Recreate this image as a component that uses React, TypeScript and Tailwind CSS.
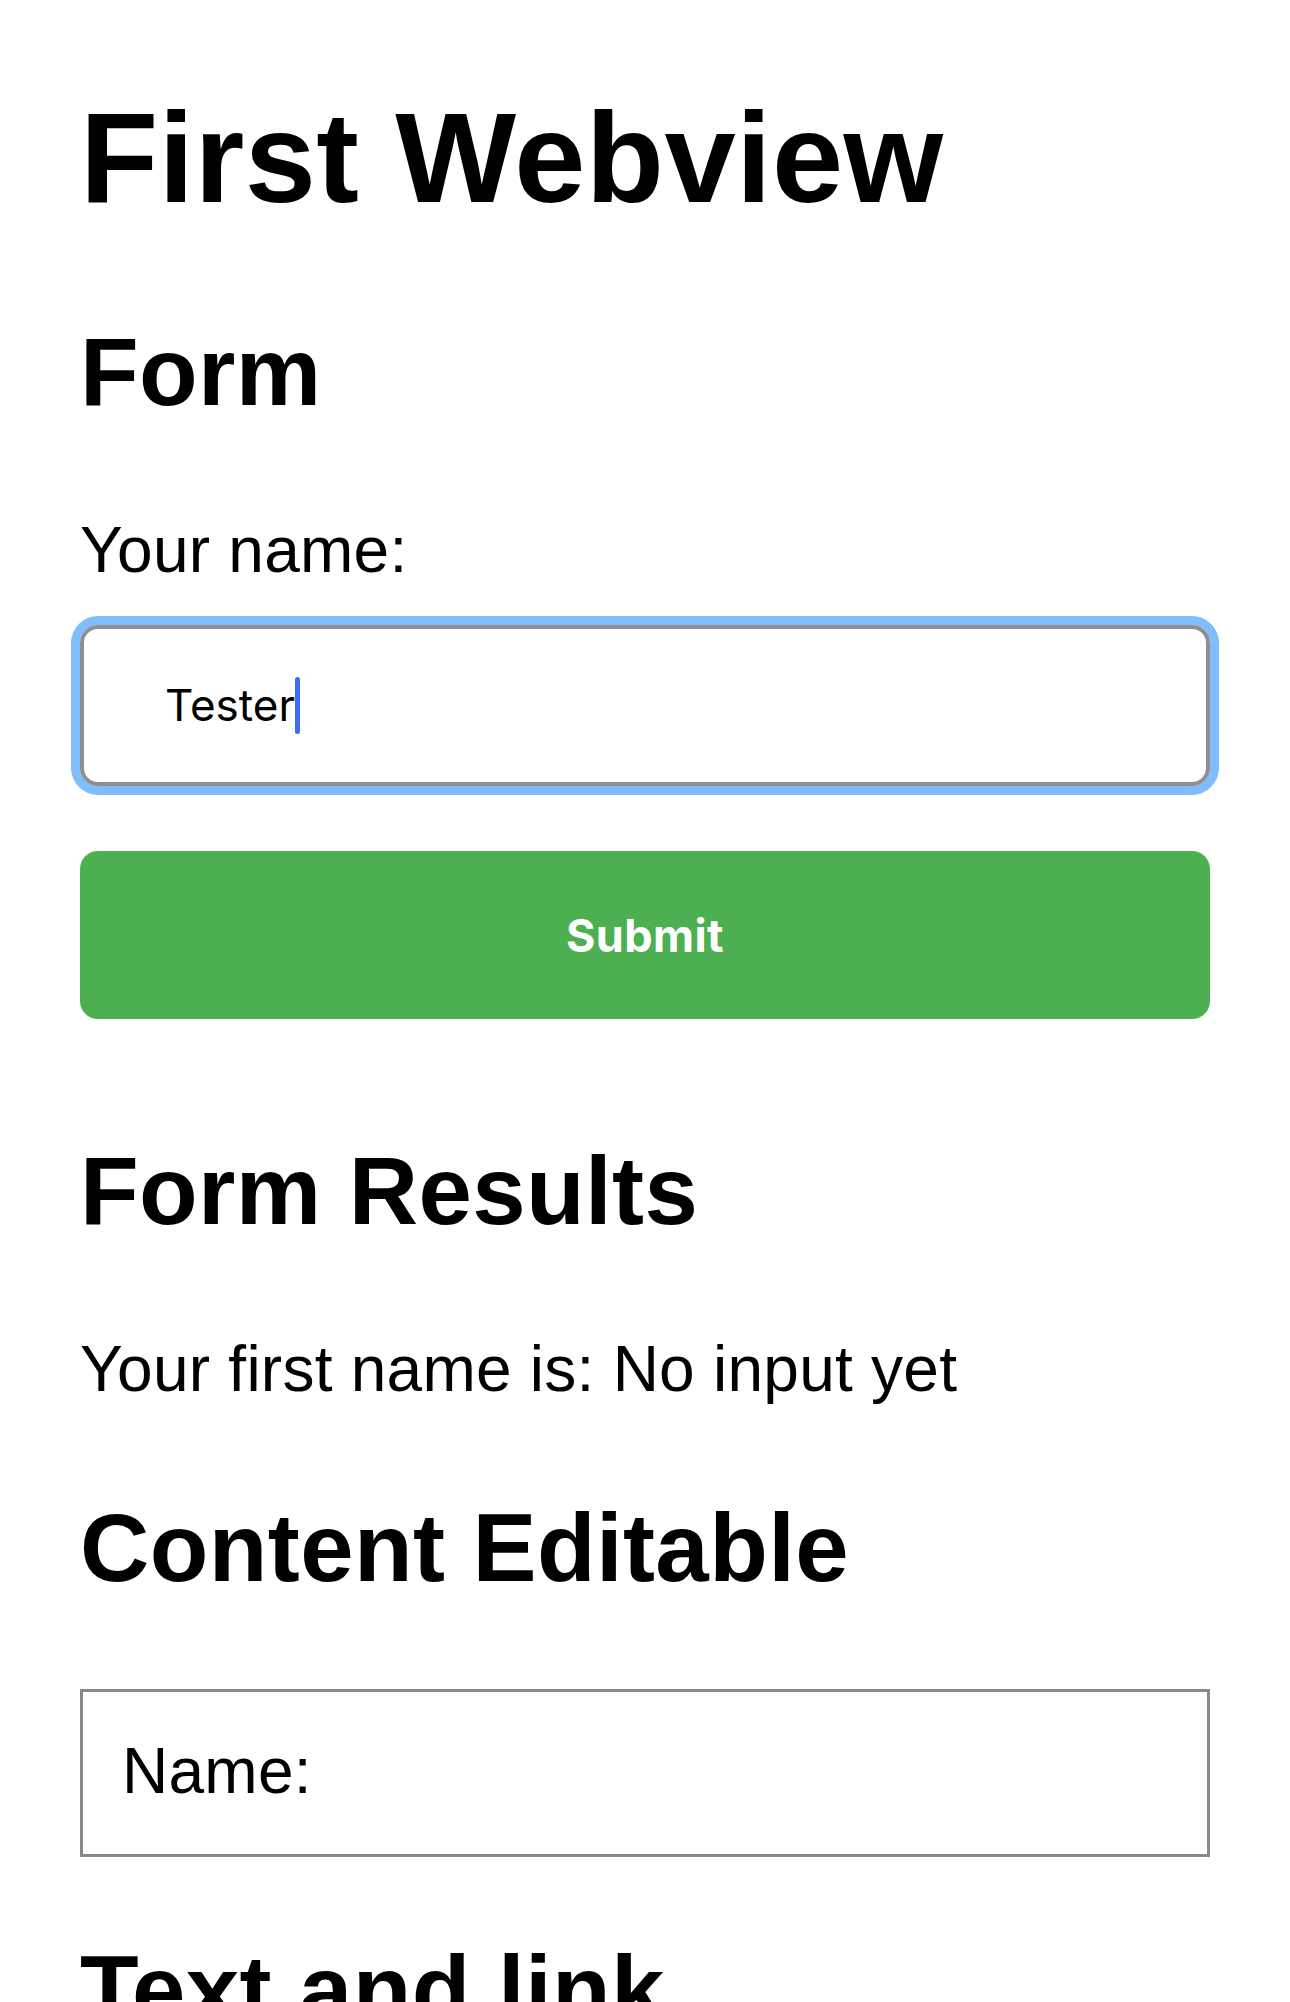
export default function App() {
  return (
    <div className="min-h-screen bg-white text-black font-['Liberation_Sans',Arial,sans-serif]">
      <div className="px-[80px] pt-[84px]">
        <h1 className="text-[128px] font-bold leading-[147px] tracking-[0.4px]">First Webview</h1>

        {/* form section */}
        <h2 className="mt-[86px] text-[96px] font-bold leading-[110px] tracking-[0.4px]">Form</h2>
        <label className="mt-[87px] block text-[64px] leading-[73.5px] tracking-[0.25px]">Your name:</label>
        <div className="mt-[37px] flex h-[161px] items-center rounded-[18px] border-4 border-[#8e8e93] pl-[81px] shadow-[0_0_0_9px_#80bdfd] font-['Inter',sans-serif]">
          <span className="text-[44px] leading-[53px]">Tester</span>
          <span className="inline-block h-[57px] w-[5px] rounded-full bg-[#3b6ef5]" />
        </div>
        <button className="mt-[65px] flex h-[168px] w-full items-center justify-center rounded-[18px] bg-[#4caf50] pt-[2px] font-['Inter',sans-serif] text-[45px] font-bold tracking-[0.4px] text-white">
          Submit
        </button>

        <h2 className="mt-[117px] text-[96px] font-bold leading-[110px] tracking-[0.4px]">Form Results</h2>
        <p className="mt-[87px] text-[64px] leading-[73.5px] tracking-[0.25px]">Your first name is: No input yet</p>

        <h2 className="mt-[87px] text-[96px] font-bold leading-[110px] tracking-[0.4px]">Content Editable</h2>
        <div
          contentEditable
          suppressContentEditableWarning
          className="mt-[86px] box-border h-[168px] border-[3px] border-[#888888] pl-[39px] pt-[43px] text-[64px] leading-[73.5px] tracking-[0.25px] outline-none"
        >
          Name:
        </div>

        <h2 className="mt-[78px] text-[96px] font-bold leading-[110px] tracking-[0.4px]">Text and link</h2>
      </div>
    </div>
  );
}
